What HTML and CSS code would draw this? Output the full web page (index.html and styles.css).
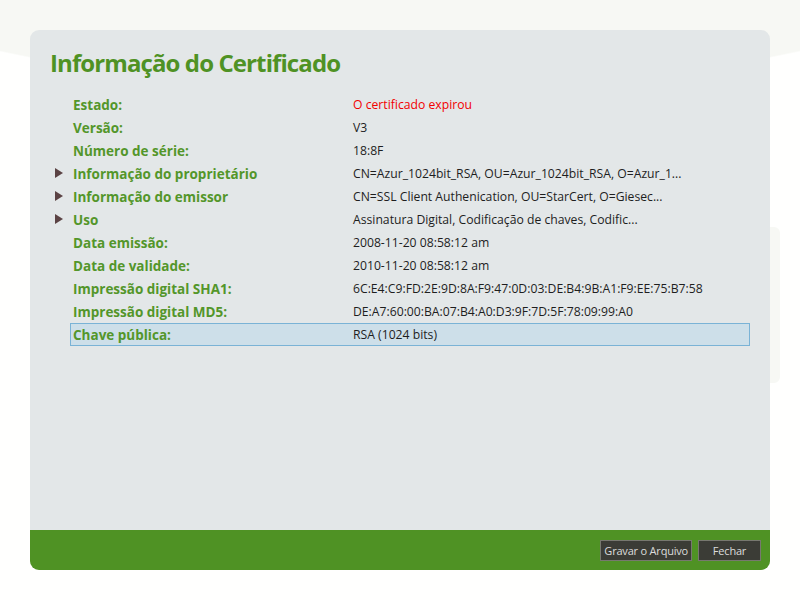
FILE: index.html
```html
<!DOCTYPE html>
<html lang="pt">
<head>
<meta charset="utf-8">
<title>Informação do Certificado</title>
<link rel="stylesheet" href="styles.css">
</head>
<body>
<div class="side-panel"></div>
<div class="dialog">
  <div class="content">
    <h1 class="title">Informação do Certificado</h1>
    <div class="rows">
      <div class="row"><span class="label">Estado:</span><span class="value expired">O certificado expirou</span></div>
      <div class="row"><span class="label">Versão:</span><span class="value">V3</span></div>
      <div class="row"><span class="label">Número de série:</span><span class="value">18:8F</span></div>
      <div class="row expandable"><span class="label">Informação do proprietário</span><span class="value">CN=Azur_1024bit_RSA, OU=Azur_1024bit_RSA, O=Azur_1...</span></div>
      <div class="row expandable"><span class="label">Informação do emissor</span><span class="value">CN=SSL Client Authenication, OU=StarCert, O=Giesec...</span></div>
      <div class="row expandable"><span class="label">Uso</span><span class="value">Assinatura Digital, Codificação de chaves, Codific...</span></div>
      <div class="row"><span class="label">Data emissão:</span><span class="value">2008-11-20 08:58:12 am</span></div>
      <div class="row"><span class="label">Data de validade:</span><span class="value">2010-11-20 08:58:12 am</span></div>
      <div class="row"><span class="label">Impressão digital SHA1:</span><span class="value">6C:E4:C9:FD:2E:9D:8A:F9:47:0D:03:DE:B4:9B:A1:F9:EE:75:B7:58</span></div>
      <div class="row"><span class="label">Impressão digital MD5:</span><span class="value">DE:A7:60:00:BA:07:B4:A0:D3:9F:7D:5F:78:09:99:A0</span></div>
      <div class="row selected"><span class="label">Chave pública:</span><span class="value">RSA (1024 bits)</span></div>
    </div>
  </div>
  <div class="footer">
    <button class="btn">Gravar o Arquivo</button>
    <button class="btn btn-close">Fechar</button>
  </div>
</div>
</body>
</html>
```
FILE: styles.css
```css
html, body {
  margin: 0;
  padding: 0;
  height: 600px;
  overflow: hidden;
}
body {
  font-family: "Open Sans", "Noto Sans", sans-serif;
  background: radial-gradient(1000px 493px at 400px -400px, #f7f8f4 99.7%, #fffffe 100%);
  padding-top: 30px;
  box-sizing: border-box;
  position: relative;
}
.side-panel {
  position: absolute;
  left: 760px;
  top: 227px;
  width: 20px;
  height: 156px;
  background: #f7f8f4;
  border-radius: 6px;
}
.dialog {
  position: relative;
  margin-left: 30px;
  width: 740px;
  height: 540px;
  background: #e3e7e8;
  border-radius: 9px;
  display: flex;
  flex-direction: column;
  overflow: hidden;
}
.content {
  flex: 1;
  padding: 17px 20px 0 20px;
}
.title {
  margin: 0 0 14px 0;
  font-size: 24px;
  font-weight: 700;
  color: #4f9224;
  letter-spacing: -0.9px;
  line-height: 32px;
}
.rows {
  margin-left: 20px;
  width: 680px;
}
.row {
  position: relative;
  display: flex;
  height: 23px;
  align-items: center;
  font-size: 12.2px;
  box-sizing: border-box;
}
.label {
  width: 280px;
  padding-left: 3px;
  box-sizing: border-box;
  font-weight: 700;
  font-size: 13.5px;
  color: #53962a;
}
.value {
  padding-left: 3px;
  color: #1e1e1e;
  white-space: nowrap;
}
.value.expired {
  color: #f20000;
}
.expandable::before {
  content: "";
  position: absolute;
  left: -15px;
  top: 6px;
  border-left: 8px solid #5b4344;
  border-top: 5.5px solid transparent;
  border-bottom: 5.5px solid transparent;
}
.selected {
  background: #cddfe9;
  border: 1px solid #7ab3d6;
}
.selected .label {
  width: 279px;
  padding-left: 2px;
}
.selected .value {
  padding-left: 3px;
}
.footer {
  height: 40px;
  background: #4f9224;
  display: flex;
  justify-content: flex-end;
  align-items: center;
  gap: 6px;
  padding-right: 9px;
}
.btn {
  font-family: "Open Sans", "Noto Sans", sans-serif;
  font-size: 11px;
  color: #dcdcdc;
  background: #3b3c36;
  border: 1px solid #77786f;
  height: 21px;
  padding: 0 3px;
  line-height: 19px;
  letter-spacing: -0.2px;
}
.btn-close {
  width: 63px;
}
```
